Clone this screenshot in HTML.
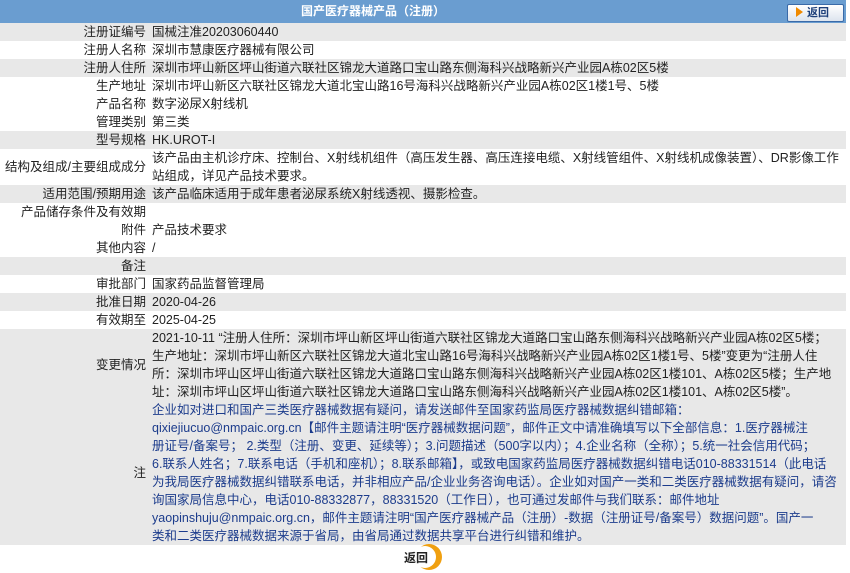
<!DOCTYPE html>
<html><head><meta charset="utf-8"><style>
body{margin:0;background:#fff;font-family:"Liberation Sans","Noto Sans CJK SC",sans-serif;font-size:12.5px;color:#222;}
.wrap{position:relative;width:846px;}
.hd{height:23px;background:#6a9dd0;color:#fff;font-weight:bold;text-align:center;line-height:23px;font-size:12px;position:relative}
.hd span{position:relative;left:-50px}
.btn{position:absolute;left:787px;top:4px;width:55px;height:16px;background:linear-gradient(#fff,#dde4ee);border:1px solid #3a6aa8;border-radius:2px;color:#1d3f7a;font-size:11px;line-height:16px;text-align:left}
.btn i{display:inline-block;width:0;height:0;border-left:7px solid #f08a00;border-top:5px solid transparent;border-bottom:5px solid transparent;margin:0 4px 0 8px;vertical-align:-1px}
table{border-collapse:collapse;width:846px}
td{padding:0;line-height:18px;vertical-align:middle;white-space:nowrap}
td.l{width:146px;text-align:right;padding-right:6px}
tr.g td{background:#e8e8e8}
.n{color:#1c3c8c}
.back{position:absolute;left:400px;top:542px;width:50px;height:30px}
</style></head><body><div class="wrap">
<div class="hd"><span>国产医疗器械产品（注册）</span><div class="btn"><i></i>返回</div></div>
<table>
<tr class="g"><td class="l">注册证编号</td><td>国械注准20203060440</td></tr>
<tr><td class="l">注册人名称</td><td>深圳市慧康医疗器械有限公司</td></tr>
<tr class="g"><td class="l">注册人住所</td><td>深圳市坪山新区坪山街道六联社区锦龙大道路口宝山路东侧海科兴战略新兴产业园A栋02区5楼</td></tr>
<tr><td class="l">生产地址</td><td>深圳市坪山新区六联社区锦龙大道北宝山路16号海科兴战略新兴产业园A栋02区1楼1号、5楼</td></tr>
<tr><td class="l">产品名称</td><td>数字泌尿X射线机</td></tr>
<tr><td class="l">管理类别</td><td>第三类</td></tr>
<tr class="g"><td class="l">型号规格</td><td>HK.UROT-I</td></tr>
<tr><td class="l">结构及组成/主要组成成分</td><td>该产品由主机诊疗床、控制台、X射线机组件（高压发生器、高压连接电缆、X射线管组件、X射线机成像装置）、DR影像工作<br>站组成，详见产品技术要求。</td></tr>
<tr class="g"><td class="l">适用范围/预期用途</td><td>该产品临床适用于成年患者泌尿系统X射线透视、摄影检查。</td></tr>
<tr><td class="l">产品储存条件及有效期</td><td></td></tr>
<tr><td class="l">附件</td><td>产品技术要求</td></tr>
<tr><td class="l">其他内容</td><td>/</td></tr>
<tr class="g"><td class="l">备注</td><td>&nbsp;</td></tr>
<tr><td class="l">审批部门</td><td>国家药品监督管理局</td></tr>
<tr class="g"><td class="l">批准日期</td><td>2020-04-26</td></tr>
<tr><td class="l">有效期至</td><td>2025-04-25</td></tr>
<tr class="g"><td class="l">变更情况</td><td>2021-10-11 “注册人住所：深圳市坪山新区坪山街道六联社区锦龙大道路口宝山路东侧海科兴战略新兴产业园A栋02区5楼；<br>生产地址：深圳市坪山新区六联社区锦龙大道北宝山路16号海科兴战略新兴产业园A栋02区1楼1号、5楼”变更为“注册人住<br>所：深圳市坪山区坪山街道六联社区锦龙大道路口宝山路东侧海科兴战略新兴产业园A栋02区1楼101、A栋02区5楼；生产地<br>址：深圳市坪山区坪山街道六联社区锦龙大道路口宝山路东侧海科兴战略新兴产业园A栋02区1楼101、A栋02区5楼”。</td></tr>
<tr class="g"><td class="l">注</td><td class="n">企业如对进口和国产三类医疗器械数据有疑问，请发送邮件至国家药监局医疗器械数据纠错邮箱：<br>qixiejiucuo@nmpaic.org.cn【邮件主题请注明“医疗器械数据问题”，邮件正文中请准确填写以下全部信息：1.医疗器械注<br>册证号/备案号； 2.类型（注册、变更、延续等）；3.问题描述（500字以内）；4.企业名称（全称）；5.统一社会信用代码；<br>6.联系人姓名；7.联系电话（手机和座机）；8.联系邮箱】，或致电国家药监局医疗器械数据纠错电话010-88331514（此电话<br>为我局医疗器械数据纠错联系电话，并非相应产品/企业业务咨询电话）。企业如对国产一类和二类医疗器械数据有疑问，请咨<br>询国家局信息中心，电话010-88332877，88331520（工作日），也可通过发邮件与我们联系：邮件地址<br>yaopinshuju@nmpaic.org.cn，邮件主题请注明“国产医疗器械产品（注册）-数据（注册证号/备案号）数据问题”。国产一<br>类和二类医疗器械数据来源于省局，由省局通过数据共享平台进行纠错和维护。</td></tr>
</table>
<div class="back">
<svg width="50" height="30" style="position:absolute;left:0;top:0"><circle cx="29" cy="15" r="13" fill="#f0a010"/><circle cx="25" cy="15" r="11" fill="#fff"/></svg>
<span style="position:absolute;left:4px;top:7px;font-weight:bold;font-size:12px;color:#222">返回</span>
</div>
</div></body></html>
